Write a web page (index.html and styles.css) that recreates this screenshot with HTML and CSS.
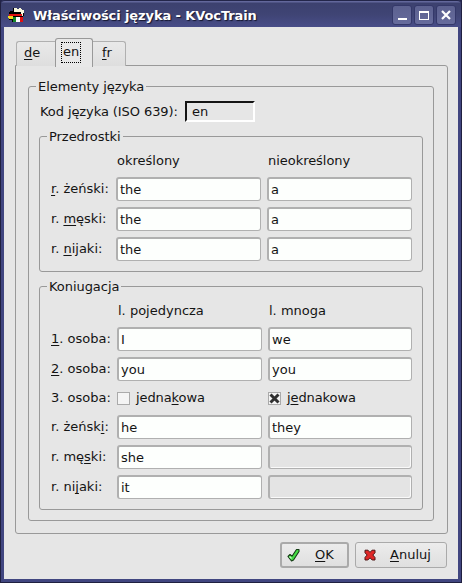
FILE: index.html
```html
<!DOCTYPE html>
<html lang="pl">
<head>
<meta charset="utf-8">
<title>Właściwości języka - KVocTrain</title>
<link rel="stylesheet" href="styles.css">
</head>
<body>
<div class="window">
  <header class="titlebar">
    <svg class="app-icon" width="17" height="16" viewBox="0 0 17 16" shape-rendering="crispEdges">
      <path fill="#000" d="M5 1h1v3H5zM15 6h1v3h-1zM2 4h4v1H2zM4 9h11v6H4z"/>
      <path fill="#f8f8dc" d="M6 1h3v1h2V1h2v1h1v1h2v3h-1v3h-3V5H6z"/>
      <path fill="#000" d="M1 5h12v2H1z"/>
      <path fill="#e01010" d="M1 7h13v2H1z"/>
      <path fill="#f4d820" d="M0 9h5v3H1v-1H0z"/>
      <path fill="#000" d="M1 12h4v1H1z"/>
      <path fill="#108828" d="M5 10h3v5H5z"/>
      <path fill="#fff" d="M8 10h4v5H8z"/>
      <path fill="#e01010" d="M12 10h3v5h-3z"/>
    </svg>
    <h1 class="title">Właściwości języka - KVocTrain</h1>
    <div class="controls">
      <span class="control"><svg width="18" height="18"><path fill="#fff" d="M5 12h9v2H5z"/></svg></span>
      <span class="control"><svg width="18" height="18"><path fill="#fff" fill-rule="evenodd" d="M4 5h10v9H4zM5 7v6h8V7z"/></svg></span>
      <span class="control"><svg width="18" height="18"><path stroke="#fff" stroke-width="2.2" d="M5 5l8 8M13 5l-8 8"/></svg></span>
    </div>
  </header>
  <main class="client">
    <nav class="tabs">
      <span class="tab tab-first"><u>d</u>e</span>
      <span class="tab tab-active"><span class="focus">en</span></span>
      <span class="tab tab-last"><u>f</u>r</span>
    </nav>
    <section class="pane">
      <div class="group outer">
        <div class="legend">Elementy języka</div>
        <div class="code-row"><span class="code-label">Kod języka (ISO 639):</span><span class="code">en</span></div>
        <div class="group inner">
          <div class="legend">Przedrostki</div>
          <div class="form articles">
            <span class="head">określony</span><span class="head-last">nieokreślony</span>
            <span><u>r</u>. żeński:</span><span class="field">the</span><span class="field">a</span>
            <span>r. <u>m</u>ęski:</span><span class="field">the</span><span class="field">a</span>
            <span>r. <u>n</u>ijaki:</span><span class="field">the</span><span class="field">a</span>
          </div>
        </div>
        <div class="group inner">
          <div class="legend">Koniugacja</div>
          <div class="form conjugation">
            <span class="head">l. pojedyncza</span><span class="head-last">l. mnoga</span>
            <span><u>1</u>. osoba:</span><span class="field">I</span><span class="field">we</span>
            <span><u>2</u>. osoba:</span><span class="field">you</span><span class="field">you</span>
            <span>3. osoba:</span>
            <span class="check"><span class="box"></span><span>jedna<u>k</u>owa</span></span>
            <span class="check"><span class="box"><svg width="11" height="11"><path stroke="#303030" stroke-width="3" d="M1.5 1.5l8 8M9.5 1.5l-8 8"/></svg></span><span>j<u>e</u>dnakowa</span></span>
            <span>r. żeńsk<u>i</u>:</span><span class="field">he</span><span class="field">they</span>
            <span>r. mę<u>s</u>ki:</span><span class="field">she</span><span class="field disabled"></span>
            <span>r. ni<u>j</u>aki:</span><span class="field">it</span><span class="field disabled"></span>
          </div>
        </div>
      </div>
    </section>
    <footer class="buttons">
      <span class="button ok">
        <svg width="14" height="14" viewBox="0 0 14 14"><path fill="#45dc45" stroke="#143c14" stroke-width="1.1" stroke-linejoin="round" d="M1 8.5l2-2 2 1.7L9.5 1.5h2.5v2L6.5 12l-2 1z"/><path stroke="#b8ffb8" fill="none" stroke-width="1.4" d="M2.5 8.5l2 2"/></svg>
        <span><u>O</u>K</span>
      </span>
      <span class="button cancel">
        <svg width="12" height="12" viewBox="0 0 12 12"><path fill="#e02828" stroke="#4c1414" stroke-linejoin="round" d="M1 1.2h3L6 3.4 8 1.2h3v2.6L8.8 6 11 8.5V11H8.2L6 8.8 3.8 11H1V8.4L3.2 6 1 3.8z"/></svg>
        <span><u>A</u>nuluj</span>
      </span>
    </footer>
  </main>
</div>
</body>
</html>
```
FILE: styles.css
```css
* { box-sizing: border-box; }
body {
  margin: 0;
  font: 13px/16px "DejaVu Sans", sans-serif;
  color: #141414;
  background: #22244a;
}
svg { display: block; flex: none; }
u { text-decoration-thickness: 1px; text-underline-offset: 2px; text-decoration-skip-ink: none; }
.window {
  width: 462px;
  height: 583px;
  padding: 0 3px 3px;
  border: 1px solid #202040;
  border-top: 0;
  border-radius: 4px 4px 0 0;
  background: #414680;
}
.titlebar {
  display: flex;
  align-items: center;
  height: 27px;
  margin: 0 -3px;
  padding: 2px 5px 0 7px;
  border-top: 1px solid #23264a;
  border-radius: 4px 4px 0 0;
  background: linear-gradient(#62679b 0, #62679b 1px, #3c416f 2px, #3f4474 50%, #484d88 100%);
}
.title {
  flex: 1;
  margin: 2px 0 0 8px;
  font-size: 13px;
  line-height: 16px;
  font-weight: bold;
  letter-spacing: -0.1px;
  color: #fff;
  text-shadow: 1px 1px 1px #14162e;
  white-space: nowrap;
}
.app-icon { margin-top: -1px; }
.controls { display: flex; gap: 2px; margin-top: -1px; }
.control {
  width: 20px;
  height: 20px;
  border: 1px solid #34386a;
  border-radius: 3px;
  background: linear-gradient(#5c6190, #666b9c);
}
.client {
  height: 552px;
  padding: 11px 11px 0;
  background: #e6e6e6;
}
.tabs { display: flex; align-items: flex-end; height: 28px; padding-left: 1px; }
.tab {
  height: 25px;
  padding: 3px 7px 0;
  border: 1px solid #b0b0b0;
  border-bottom: 0;
  border-radius: 3px 3px 0 0;
  background: linear-gradient(#e9e9e9, #dedede);
}
.tab-first { width: 39px; border-right: 0; border-top-right-radius: 0; }
.tab-last { width: 33px; padding-left: 9px; border-left: 0; border-top-left-radius: 0; }
.tab-active {
  position: relative;
  width: 38px;
  height: 29px;
  margin-bottom: -1px;
  padding: 3px 5px 0;
  border-color: #999;
  background: #e8e8e8;
}
.focus {
  display: block;
  width: 20px;
  height: 21px;
  padding: 1px 0 0 1px;
  border: 1px dotted #000;
}
.pane {
  width: 433px;
  height: 469px;
  margin-top: -1px;
  padding: 20px 12px 0;
  border: 1px solid #999;
  border-radius: 0 3px 3px;
}
.group { position: relative; border: 1px solid #999; border-radius: 3px; }
.outer { width: 406px; height: 435px; padding: 14px 10px 0; }
.legend {
  position: absolute;
  top: -8px;
  left: 7px;
  padding: 0 2px;
  letter-spacing: -0.05px;
  background: #e6e6e6;
}
.code-row { display: flex; align-items: center; height: 21px; padding-left: 1px; }
.code-label { width: 145px; letter-spacing: -0.08px; white-space: nowrap; }
.code {
  width: 70px;
  height: 21px;
  padding: 1px 5px;
  border: 2px solid;
  border-color: #141414 #fff #fff #141414;
}
.inner { width: 384px; height: 136px; margin-top: 14px; padding: 4px 10px 0 11px; }
.inner + .inner { height: 224px; }
.form { display: grid; gap: 6px; align-items: center; }
.articles { grid-template: 30px repeat(3, 24px) / 59px 145px 145px; }
.conjugation { grid-template: 30px 24px 24px 22px repeat(3, 24px) / 60px 145px 144px; }
.head { grid-column: 2; padding: 9px 0 0 1px; }
.head-last { padding: 9px 0 0 1px; }
.articles .head-last { letter-spacing: -0.04px; }
.field {
  height: 24px;
  padding: 3px 2px 0;
  border: 2px solid #b0b0b0;
  border-width: 2px 1px 1px 2px;
  border-radius: 3px;
  background: #fdfffd;
}
.disabled { background: #e4e4e4; box-shadow: inset -1px -1px #fafafa; }
.check { display: flex; align-items: center; gap: 6px; letter-spacing: -0.1px; }
.box {
  display: grid;
  place-items: center;
  width: 13px;
  height: 13px;
  border: 1px solid #aaa;
  background: #f4f4f4;
}
.buttons { display: flex; justify-content: flex-end; gap: 6px; margin-top: 8px; }
.button {
  display: flex;
  align-items: center;
  height: 26px;
  border: 1px solid #aaa;
  border-radius: 3px;
  background: linear-gradient(#ececec, #dfdfdf);
}
.ok { width: 69px; border: 2px solid #aaa; padding-left: 5px; gap: 14px; }
.cancel { width: 92px; padding-left: 8px; gap: 14px; }
```
